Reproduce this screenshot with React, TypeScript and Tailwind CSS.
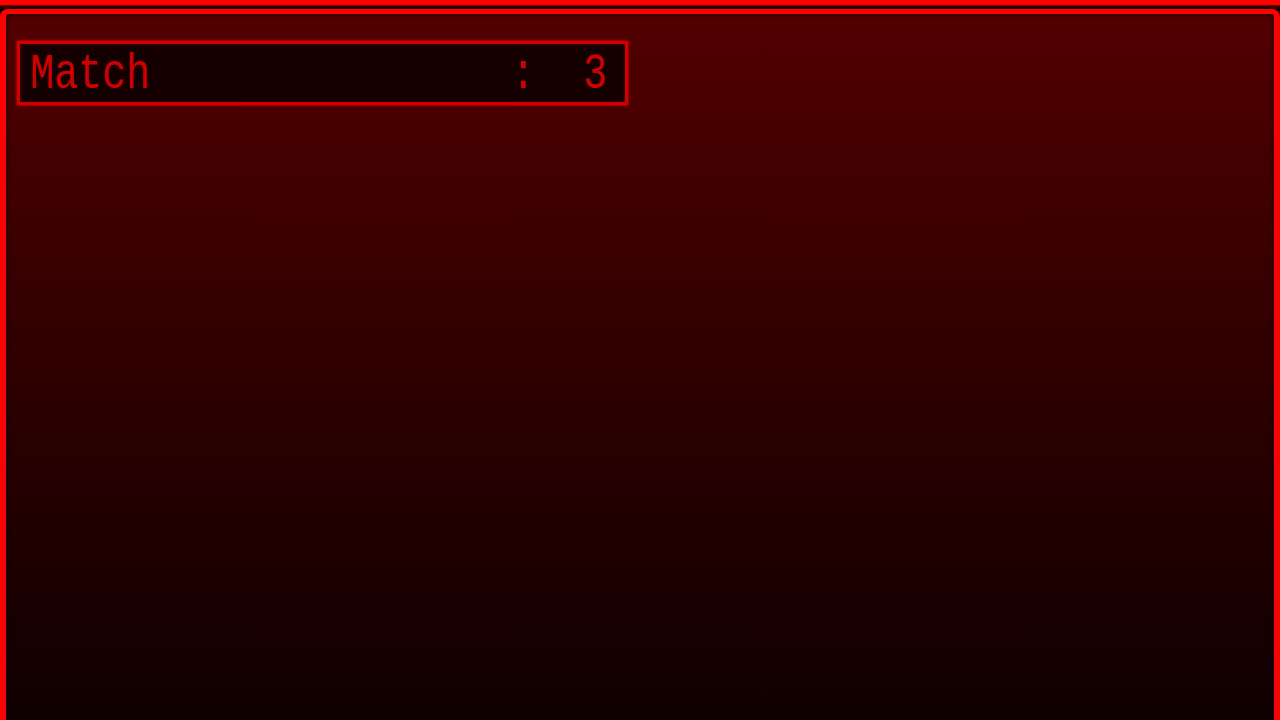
export default function App() {
  return (
    <div className="flex h-[720px] w-[1280px] flex-col overflow-hidden bg-[#1a0000]" style={{ fontFamily: '"Liberation Mono", "DejaVu Sans Mono", monospace' }}>
      <div className="h-[5px] w-full shrink-0 bg-[#ff0000] shadow-[0_0_3px_#ff0000]" />
      <div className="mt-[4px] flex flex-1 flex-col rounded-t-[8px] border-x-[6px] border-t-[5px] border-[#ff0000] bg-gradient-to-b from-[#520000] to-[#100000] shadow-[inset_0_0_4px_#000]">
        <div className="ml-[11px] mt-[27px] flex h-[64px] w-[611px] items-center border-[3px] border-[#d00000] bg-[#140000] pl-[10px] pr-[18px] shadow-[0_0_3px_#ff0000,inset_0_0_3px_#600000]">
          <span className="mt-[4px] inline-block origin-center scale-y-[1.25] text-[40px] leading-none text-[#d00000]">Match</span>
          <span className="ml-auto mt-[4px] inline-block origin-center scale-y-[1.25] whitespace-pre text-[40px] leading-none text-[#d00000]">{':  3'}</span>
        </div>
      </div>
    </div>
  )
}
